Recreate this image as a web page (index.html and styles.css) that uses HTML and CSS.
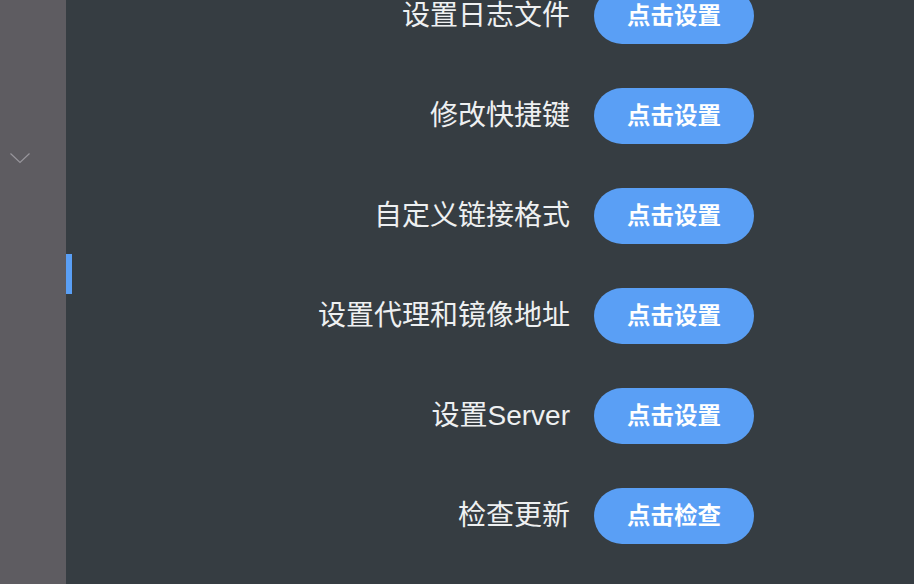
FILE: index.html
```html
<!DOCTYPE html>
<html lang="zh-CN">
<head>
<meta charset="utf-8">
<title>设置</title>
<link rel="stylesheet" href="styles.css">
</head>
<body>
<div class="app">
  <aside class="sidebar">
    <svg class="chevron" width="20" height="11" viewBox="0 0 20 11"><path d="M0.5 0.5 L10 9.5 L19.5 0.5" fill="none" stroke="#98969c" stroke-width="1.2"/></svg>
  </aside>
  <main class="main">
    <span class="indicator"></span>
    <ul class="settings">
      <li class="row"><span class="label">设置日志文件</span><button class="btn">点击设置</button></li>
      <li class="row"><span class="label">修改快捷键</span><button class="btn">点击设置</button></li>
      <li class="row"><span class="label">自定义链接格式</span><button class="btn">点击设置</button></li>
      <li class="row"><span class="label">设置代理和镜像地址</span><button class="btn">点击设置</button></li>
      <li class="row"><span class="label">设置Server</span><button class="btn">点击设置</button></li>
      <li class="row"><span class="label">检查更新</span><button class="btn">点击检查</button></li>
    </ul>
  </main>
</div>
</body>
</html>
```
FILE: styles.css
```css
html, body {
  margin: 0;
  padding: 0;
  height: 100%;
  overflow: hidden;
}
body {
  font-family: "Liberation Sans", "Noto Sans CJK SC", sans-serif;
  background: #363d42;
}
.app {
  display: flex;
  height: 584px;
}
.sidebar {
  width: 66px;
  flex: none;
  background: #5e5c61;
}
.chevron {
  display: block;
  margin: 153px 0 0 10px;
}
.main {
  position: relative;
  flex: 1;
  background: #363d42;
}
.indicator {
  position: absolute;
  left: 0;
  top: 254px;
  width: 6px;
  height: 40px;
  background: #5a9ff5;
}
.settings {
  list-style: none;
  margin: -12px 0 0 0;
  padding: 0 160px 0 0;
  display: flex;
  flex-direction: column;
  gap: 44px;
}
.row {
  display: flex;
  justify-content: flex-end;
  align-items: center;
  gap: 24px;
  height: 56px;
}
.label {
  font-size: 28px;
  line-height: 34px;
  color: #eef0f1;
  margin-top: -1px;
}
.btn {
  width: 160px;
  height: 56px;
  border: none;
  border-radius: 28px;
  background: #5a9ff5;
  color: #ffffff;
  font-family: "Noto Sans CJK SC", sans-serif;
  font-weight: 700;
  font-size: 23.5px;
  line-height: 30px;
  padding: 0 0 4px 0;
  cursor: pointer;
}
```
